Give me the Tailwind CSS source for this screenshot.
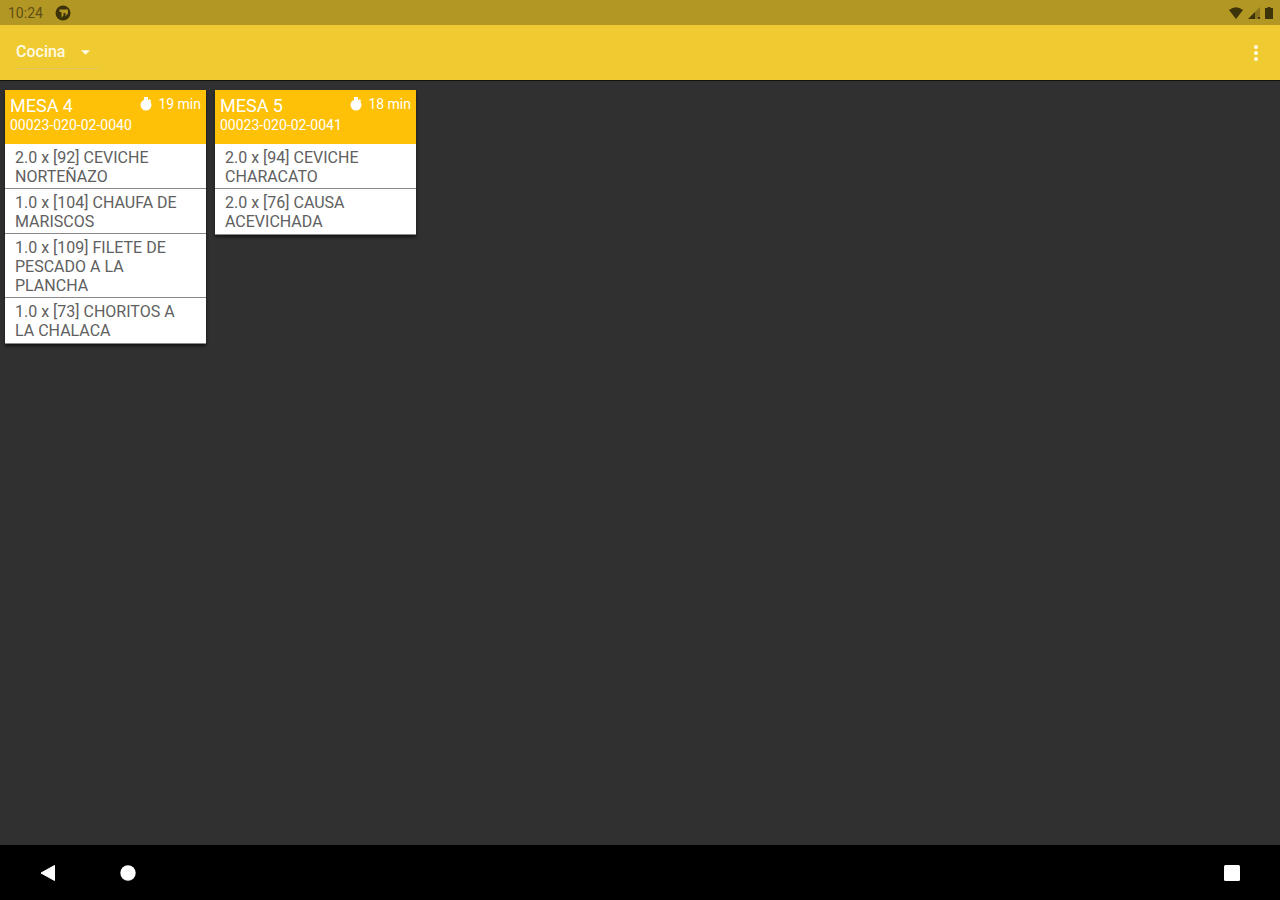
<!DOCTYPE html>
<html lang="es">
<head>
<meta charset="utf-8">
<meta name="viewport" content="width=device-width, initial-scale=1">
<title>Cocina</title>
<script src="https://cdn.jsdelivr.net/npm/@tailwindcss/browser@4"></script>
</head>
<body class="flex min-h-screen flex-col bg-[#303030] font-['Roboto',sans-serif]">
  <div class="flex h-[25px] items-center justify-between bg-[#b39725] pl-2 pr-1 text-[#5f5014]">
    <div class="flex items-center gap-3">
      <span class="text-sm">10:24</span>
      <svg class="size-4" viewBox="0 0 16 16" aria-hidden="true">
        <circle cx="8" cy="8" r="7.500" fill="#3d3308"/>
        <path d="M4.500 4.500H13V8.500L10.500 11V8H8.500V10.500L6.500 12.500V7H4.500Z" fill="#b39725"/>
      </svg>
    </div>
    <div class="flex items-center gap-1 text-[#3d3308]">
      <svg class="h-3 w-4" viewBox="0 0 16 12" aria-hidden="true"><path d="M1 3Q8-2.400 15 3L8 12Z" fill="currentColor"/></svg>
      <svg class="h-3 w-3" viewBox="0 0 12 12" aria-hidden="true"><path d="M0 12 12 0V12Z" fill="currentColor" opacity=".35"/><path d="M0 12 7 5V12ZM10 10h2v2h-2z" fill="currentColor"/></svg>
      <svg class="h-3 w-3" viewBox="0 0 12 12" aria-hidden="true"><path d="M3.500 0h3v1H9v11H1V1h2.500Z" fill="currentColor"/></svg>
    </div>
  </div>

  <header class="flex h-14 items-center justify-between border-b border-[#14120a] bg-[#f0ca31] px-4 text-[#fffbe6]">
    <div class="relative border-b border-[#e3c457]">
      <select aria-label="Área" class="h-8 w-[82px] appearance-none bg-transparent text-base font-medium outline-none">
        <option>Cocina</option>
      </select>
      <svg class="pointer-events-none absolute right-2 top-[14px] h-[5px] w-[9px]" viewBox="0 0 10 5" aria-hidden="true"><path d="M0 0h10L5 5Z" fill="currentColor"/></svg>
    </div>
    <button type="button" aria-label="Más opciones" class="flex h-8 w-4 items-center justify-center">
      <svg class="h-4 w-1" viewBox="0 0 4 16" fill="currentColor" aria-hidden="true"><circle cx="2" cy="2" r="2"/><circle cx="2" cy="8" r="2"/><circle cx="2" cy="14" r="2"/></svg>
    </button>
  </header>

  <main class="flex flex-1 flex-wrap content-start items-start gap-[9px] px-[5px] pt-[9px]">
    <article class="w-[201px] bg-white shadow-[0_2px_3px_rgba(0,0,0,0.6)]">
      <div class="h-[54px] bg-[#ffc107] px-[5px] pt-[5px] text-white">
        <div class="flex items-start justify-between">
          <h2 class="text-lg leading-[22px]">MESA 4</h2>
          <p class="flex items-center gap-[6px] text-sm leading-[18px]">
            <svg class="h-[14px] w-3" viewBox="0 0 12 14" fill="currentColor" aria-hidden="true"><path d="M4 0h4v3H4z"/><circle cx="6" cy="8" r="5.500"/><path d="m9.500 2 1.800 1.800-1 1-1.800-1.800z"/></svg>
            19 min
          </p>
        </div>
        <p class="text-sm leading-[17px]">00023-020-02-0040</p>
      </div>
      <ul class="text-base leading-[19px] text-[#606060]">
        <li class="border-b border-[#8a8a8a] pt-1 pr-4 pb-[2px] pl-[10px]">2.0 x [92] CEVICHE NORTEÑAZO</li>
        <li class="border-b border-[#8a8a8a] pt-1 pr-4 pb-[2px] pl-[10px]">1.0 x [104] CHAUFA DE MARISCOS</li>
        <li class="border-b border-[#8a8a8a] pt-1 pr-4 pb-[2px] pl-[10px]">1.0 x [109] FILETE DE PESCADO A LA PLANCHA</li>
        <li class="border-b border-[#8a8a8a] pt-1 pr-4 pb-[3px] pl-[10px]">1.0 x [73] CHORITOS A LA CHALACA</li>
      </ul>
    </article>

    <article class="w-[201px] bg-white shadow-[0_2px_3px_rgba(0,0,0,0.6)]">
      <div class="h-[54px] bg-[#ffc107] px-[5px] pt-[5px] text-white">
        <div class="flex items-start justify-between">
          <h2 class="text-lg leading-[22px]">MESA 5</h2>
          <p class="flex items-center gap-[6px] text-sm leading-[18px]">
            <svg class="h-[14px] w-3" viewBox="0 0 12 14" fill="currentColor" aria-hidden="true"><path d="M4 0h4v3H4z"/><circle cx="6" cy="8" r="5.500"/><path d="m9.500 2 1.800 1.800-1 1-1.800-1.800z"/></svg>
            18 min
          </p>
        </div>
        <p class="text-sm leading-[17px]">00023-020-02-0041</p>
      </div>
      <ul class="text-base leading-[19px] text-[#606060]">
        <li class="border-b border-[#8a8a8a] pt-1 pr-4 pb-[2px] pl-[10px]">2.0 x [94] CEVICHE CHARACATO</li>
        <li class="border-b border-[#8a8a8a] pt-1 pr-4 pb-[3px] pl-[10px]">2.0 x [76] CAUSA ACEVICHADA</li>
      </ul>
    </article>
  </main>

  <nav aria-label="Sistema" class="flex h-[55px] items-center justify-between bg-black px-10 text-white">
    <div class="flex items-center gap-16">
      <button type="button" aria-label="Atrás" class="flex size-4 items-center justify-center"><svg class="size-4" viewBox="0 0 16 16" aria-hidden="true"><path d="M1 8 14.500.500v15Z" fill="#fff" stroke="#fff" stroke-linejoin="round"/></svg></button>
      <button type="button" aria-label="Inicio" class="flex size-4 items-center justify-center"><svg class="size-4" viewBox="0 0 16 16" aria-hidden="true"><circle cx="8" cy="8" r="7.700" fill="#fff"/></svg></button>
    </div>
    <button type="button" aria-label="Recientes" class="flex size-4 items-center justify-center"><svg class="size-4" viewBox="0 0 16 16" aria-hidden="true"><rect width="16" height="16" rx="1.500" fill="#fff"/></svg></button>
  </nav>
</body>
</html>
